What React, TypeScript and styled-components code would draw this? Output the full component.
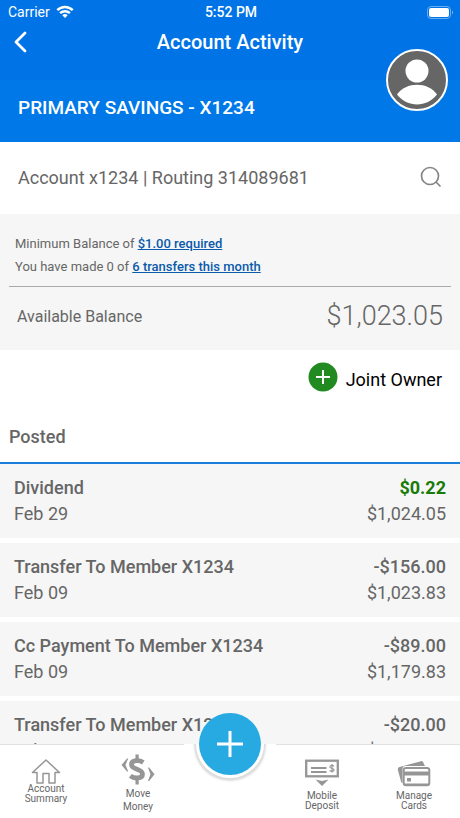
import React from "react";
import styled, { createGlobalStyle } from "styled-components";

const GlobalStyle = createGlobalStyle`
  *, *::before, *::after { box-sizing: border-box; }
  body {
    margin: 0;
    background: #ffffff;
    color: #666666;
    font-family: Roboto, "Liberation Sans", sans-serif;
  }
  h1, h2, h3, p, ul, dl, dd { margin: 0; padding: 0; }
  ul { list-style: none; }
  button { border: 0; padding: 0; background: none; font: inherit; color: inherit; cursor: pointer; }
`;

const Screen = styled.div`
  display: flex;
  flex-direction: column;
  height: 100vh;
  overflow: hidden;
`;

const Header = styled.header`
  position: relative;
  flex: none;
  color: #ffffff;
  background: #0078e8;
`;

const TopBar = styled.div`
  padding-bottom: 20px;
  background: #0073e6;
`;

const StatusBar = styled.div`
  display: grid;
  grid-template-columns: 1fr auto 1fr;
  align-items: center;
  height: 24px;
  padding: 0 6px 0 8px;
  font-size: 14px;
  line-height: 24px;
`;

const Carrier = styled.span`
  display: flex;
  align-items: center;
  gap: 6px;
`;

const Clock = styled.span`
  font-weight: 500;
`;

const BatterySlot = styled.span`
  display: flex;
  justify-content: flex-end;
`;

const TitleBar = styled.div`
  display: grid;
  grid-template-columns: 40px 1fr 40px;
  align-items: center;
  height: 36px;
`;

const BackButton = styled.button`
  display: flex;
  align-items: center;
  justify-content: center;
  height: 36px;
`;

const Title = styled.h1`
  font-size: 20px;
  font-weight: 500;
  line-height: 36px;
  text-align: center;
`;

const AccountName = styled.h2`
  padding: 0 18px 6px;
  font-size: 19px;
  font-weight: 500;
  line-height: 56px;
`;

const Avatar = styled.button`
  position: absolute;
  right: 12px;
  bottom: 31px;
  width: 62px;
  height: 62px;
  border-radius: 50%;
`;

const Content = styled.main`
  flex: 1;
  min-height: 0;
  overflow-y: auto;
  scrollbar-width: none;
`;

const NumbersRow = styled.div`
  display: flex;
  align-items: center;
  justify-content: space-between;
  height: 72px;
  padding: 0 18px 2px;
  font-size: 18px;
`;

const SearchButton = styled.button`
  display: flex;
`;

const Summary = styled.section`
  height: 136px;
  padding: 18px 9px 0;
  background: #f6f6f6;
`;

const Notices = styled.div`
  padding: 0 6px 8px;
  border-bottom: 1px solid #aaaaaa;
  font-size: 13px;
  line-height: 23px;
`;

const NoticeLink = styled.a`
  color: #0a5bab;
  font-weight: 500;
  text-decoration: underline;
`;

const Balance = styled.dl`
  display: flex;
  align-items: center;
  justify-content: space-between;
  padding: 0 8px;
`;

const BalanceLabel = styled.dt`
  font-size: 16px;
`;

const BalanceValue = styled.dd`
  font-size: 27px;
  font-weight: 300;
  line-height: 58px;
`;

const JointOwner = styled.button`
  display: flex;
  align-items: center;
  gap: 8px;
  height: 56px;
  margin-left: auto;
  padding: 2px 18px 0 0;
  color: #000000;
  font-size: 18px;
  svg { margin-bottom: 4px; }
`;

const PostedHeading = styled.h3`
  padding: 12px 9px 6px;
  border-bottom: 2px solid #1a7fdb;
  font-size: 18px;
  font-weight: 500;
  line-height: 38px;
`;

const Transactions = styled.ul`
  display: grid;
  gap: 5px;
`;

const Transaction = styled.li`
  display: grid;
  grid-template-columns: 1fr auto;
  align-content: start;
  height: 74px;
  padding: 11px 14px 0;
  background: #f6f6f6;
  font-size: 18px;
  line-height: 26px;
`;

const Name = styled.span`
  font-weight: 500;
`;

const Amount = styled.span<{ $credit?: boolean }>`
  color: ${(p) => (p.$credit ? "#187a08" : "inherit")};
  font-weight: ${(p) => (p.$credit ? 700 : 500)};
  text-align: right;
`;

const Running = styled.span`
  text-align: right;
`;

const NavBar = styled.nav`
  position: relative;
  flex: none;
  display: grid;
  grid-template-columns: repeat(5, 1fr);
  height: 74px;
  border-top: 1px solid #e2e2e2;
  background: #ffffff;
`;

const NavItem = styled.a<{ $loose?: boolean }>`
  display: flex;
  flex-direction: column;
  align-items: center;
  color: #666666;
  font-size: 10px;
  line-height: ${(p) => (p.$loose ? "13px" : "10px")};
  text-align: center;
  text-decoration: none;
  white-space: pre-line;
  svg { display: block; flex: none; }
`;

const AddSlot = styled.div`
  position: relative;
`;

/* White notch with the lower half of the button's rim and its shadow. */
const AddBackdrop = styled.div`
  position: absolute;
  inset: -1px 0 0;
  overflow: hidden;
  background: #ffffff;
  &::before {
    content: "";
    position: absolute;
    top: -34px;
    left: 50%;
    width: 68px;
    height: 68px;
    margin-left: -34px;
    border-radius: 50%;
    background: #ffffff;
    box-shadow: 0 1px 2px 2px #dcdcdc;
  }
`;

const AddButton = styled.button`
  position: absolute;
  top: -32px;
  left: 50%;
  display: flex;
  align-items: center;
  justify-content: center;
  width: 62px;
  height: 62px;
  margin-left: -31px;
  border-radius: 50%;
  background: #27aae1;
`;

const WifiIcon = () => (
  <svg width="18" height="14" viewBox="0 0 18 14" aria-hidden="true">
    <g fill="none" stroke="#fff" strokeWidth="2.5">
      <path d="M1.3 5.2C5.6.9 12.4.9 16.7 5.2" />
      <path d="M4.1 8.2c2.8-2.700 7-2.700 9.800 0" />
    </g>
    <path d="M9 13 6.300 10.200c1.500-1.500 3.900-1.500 5.400 0z" fill="#fff" />
  </svg>
);

const BatteryIcon = () => (
  <svg width="27" height="13" viewBox="0 0 27 13" aria-hidden="true">
    <rect x="0.500" y="0.500" width="23" height="12" rx="3.500" fill="none" stroke="#66adf2" />
    <rect x="2" y="2" width="20" height="9" rx="2" fill="#fff" />
    <path d="M25 4.500c1.500.7 1.500 3.300 0 4z" fill="#66adf2" />
  </svg>
);

const BackIcon = () => (
  <svg width="14" height="22" viewBox="0 0 14 22" aria-hidden="true">
    <path d="M12 2 3 11l9 9" fill="none" stroke="#fff" strokeWidth="2.8" strokeLinecap="round" strokeLinejoin="round" />
  </svg>
);

const AvatarIcon = () => (
  <svg width="62" height="62" viewBox="0 0 62 62" aria-hidden="true">
    <circle cx="31" cy="31" r="30" fill="#666" stroke="#fff" strokeWidth="2" />
    <circle cx="31" cy="22" r="11.500" fill="#fff" />
    <path d="M11 45.500C20 32.500 42 32.500 51 45.500 41 58.800 21 58.800 11 45.500z" fill="#fff" />
  </svg>
);

const SearchIcon = () => (
  <svg width="22" height="22" viewBox="0 0 22 22" fill="none" stroke="#858585" strokeWidth="1.700" aria-hidden="true">
    <circle cx="10" cy="10" r="8.500" />
    <path d="m16 16 4.500 4.500" />
  </svg>
);

const GreenPlusIcon = () => (
  <svg width="30" height="30" viewBox="0 0 30 30" aria-hidden="true">
    <circle cx="15" cy="15" r="14.500" fill="#218a21" />
    <path d="M8 15h14M15 8v14" stroke="#fff" strokeWidth="2" />
  </svg>
);

const AddIcon = () => (
  <svg width="26" height="26" viewBox="0 0 26 26" aria-hidden="true">
    <path d="M0 13h26M13 0v26" stroke="#fff" strokeWidth="3" />
  </svg>
);

const HomeIcon = () => (
  <svg width="30" height="39" viewBox="0 0 30 39" aria-hidden="true">
    <path
      d="M15 15 1.500 27.500H6V38h6v-9.500h6V38h6V27.500h4.500z"
      fill="none"
      stroke="#969696"
      strokeWidth="1.500"
      strokeLinejoin="round"
    />
  </svg>
);

const MoveMoneyIcon = () => (
  <svg width="34" height="42" viewBox="0 0 34 42" aria-hidden="true">
    <path d="M22.300 17.400C18 14.600 10.500 14.800 10.500 19.500c0 5.500 11 4 11 9.500 0 5-8 5-12.200 1.800" fill="none" stroke="#969696" strokeWidth="4.800" />
    <path d="M14.500 9.500h3.200v5h-3.200zM14.500 33h3.200v6.500h-3.200z" fill="#969696" />
    <path d="M6 13.500h1.200L4.500 20l2.700 6.500H6L.5 20z" fill="#969696" />
    <path d="M27 22.500h1.200l5.300 6.800-5.300 6.700H27l2.400-6.700z" fill="#969696" />
  </svg>
);

const DepositIcon = () => (
  <svg width="34" height="46" viewBox="0 0 34 46" aria-hidden="true">
    <rect x="1.200" y="15.700" width="31.600" height="15.600" fill="none" stroke="#969696" strokeWidth="2.300" />
    <path d="M6 23h15.500M6 27h15.500" stroke="#969696" strokeWidth="2" />
    <path d="M29 21.200c-1.800-1.300-4.300-.8-4.100.8.2 1.700 4.200 1 4.200 3 0 1.500-2.700 1.800-4.500.5M27 19v8.500" fill="none" stroke="#969696" strokeWidth="1.200" />
    <path d="M10.500 34.500 17 36l6.500-1.500L17 41z" fill="#969696" />
  </svg>
);

const CardsIcon = () => (
  <svg width="34" height="46" viewBox="0 0 34 46" aria-hidden="true">
    <path d="M2.500 22 24 16.200q1.500-.4 2 .9L28 21H8.500q-3 0-3 3v14q-1 0-1.400-1.300L.9 25Q.3 22.700 2.500 22z" fill="#969696" />
    <rect x="6.700" y="23" width="25.600" height="17.300" rx="2.300" fill="#fff" stroke="#969696" strokeWidth="2" />
    <path d="M7 26.500h25v4H7z" fill="#969696" />
    <path d="M10 33h4v3.500h-4zM7.500 38.600h24v1.700h-24z" fill="#969696" />
  </svg>
);

const transactions = [
  { name: "Dividend", date: "Feb 29", amount: "$0.22", balance: "$1,024.05", credit: true },
  { name: "Transfer To Member X1234", date: "Feb 09", amount: "-$156.00", balance: "$1,023.83" },
  { name: "Cc Payment To Member X1234", date: "Feb 09", amount: "-$89.00", balance: "$1,179.83" },
  { name: "Transfer To Member X1234", date: "Feb 09", amount: "-$20.00", balance: "$1,268.83" },
];

export default function App() {
  return (
    <Screen>
      <GlobalStyle />
      <Header>
        <TopBar>
          <StatusBar>
            <Carrier>Carrier <WifiIcon /></Carrier>
            <Clock>5:52 PM</Clock>
            <BatterySlot><BatteryIcon /></BatterySlot>
          </StatusBar>
          <TitleBar>
            <BackButton aria-label="Back"><BackIcon /></BackButton>
            <Title>Account Activity</Title>
          </TitleBar>
        </TopBar>
        <AccountName>PRIMARY SAVINGS - X1234</AccountName>
        <Avatar aria-label="Profile"><AvatarIcon /></Avatar>
      </Header>
      <Content>
        <NumbersRow>
          <p>Account x1234 | Routing 314089681</p>
          <SearchButton aria-label="Search"><SearchIcon /></SearchButton>
        </NumbersRow>
        <Summary>
          <Notices>
            <p>Minimum Balance of <NoticeLink href="#minimum">$1.00 required</NoticeLink></p>
            <p>You have made 0 of <NoticeLink href="#transfers">6 transfers this month</NoticeLink></p>
          </Notices>
          <Balance>
            <BalanceLabel>Available Balance</BalanceLabel>
            <BalanceValue>$1,023.05</BalanceValue>
          </Balance>
        </Summary>
        <JointOwner><GreenPlusIcon />Joint Owner</JointOwner>
        <PostedHeading>Posted</PostedHeading>
        <Transactions>
          {transactions.map((t, i) => (
            <Transaction key={i}>
              <Name>{t.name}</Name>
              <Amount $credit={t.credit}>{t.amount}</Amount>
              <span>{t.date}</span>
              <Running>{t.balance}</Running>
            </Transaction>
          ))}
        </Transactions>
      </Content>
      <NavBar>
        <NavItem href="#summary"><HomeIcon />{"Account\nSummary"}</NavItem>
        <NavItem href="#move" $loose><MoveMoneyIcon />{"Move\nMoney"}</NavItem>
        <AddSlot>
          <AddBackdrop />
          <AddButton aria-label="Add"><AddIcon /></AddButton>
        </AddSlot>
        <NavItem href="#deposit"><DepositIcon />{"Mobile\nDeposit"}</NavItem>
        <NavItem href="#cards"><CardsIcon />{"Manage\nCards"}</NavItem>
      </NavBar>
    </Screen>
  );
}
